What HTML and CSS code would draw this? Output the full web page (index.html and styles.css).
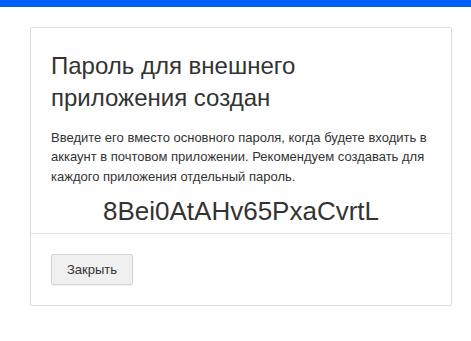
FILE: index.html
```html
<!DOCTYPE html>
<html lang="ru">
<head>
<meta charset="utf-8">
<link rel="stylesheet" href="styles.css">
</head>
<body>
<div class="topbar"></div>
<div class="card">
  <div class="card-body">
    <h1 class="title">Пароль для внешнего приложения создан</h1>
    <p class="text">Введите его вместо основного пароля, когда будете входить в аккаунт в почтовом приложении. Рекомендуем создавать для каждого приложения отдельный пароль.</p>
    <div class="password">8Bei0AtAHv65PxaCvrtL</div>
  </div>
  <div class="card-footer">
    <button class="btn">Закрыть</button>
  </div>
</div>
</body>
</html>
```
FILE: styles.css
```css
html, body {
  margin: 0;
  padding: 0;
  background: #fff;
  font-family: "Liberation Sans", Arial, sans-serif;
  color: #333;
}
.topbar {
  height: 7px;
  background: #005ff9;
}
.card {
  margin: 20px 0 0 30px;
  width: 420px;
  border: 1px solid #ddd;
  box-shadow: 0 1px 2px rgba(0,0,0,0.06);
  border-radius: 2px;
}
.card-body {
  padding: 22px 20px 7px 20px;
}
.title {
  margin: 0;
  font-size: 24px;
  font-weight: normal;
  line-height: 32.4px;
  max-width: 300px;
}
.text {
  margin: 13px 0 0 0;
  font-size: 13px;
  line-height: 19.5px;
}
.password {
  margin-top: 10px;
  text-align: center;
  font-size: 26px;
  line-height: 30px;
}
.card-footer {
  border-top: 1px solid #e5e5e5;
  padding: 20px;
}
.btn {
  display: block;
  width: 82px;
  height: 31px;
  background: #f0f0f0;
  border: 1px solid #d5d5d5;
  border-radius: 2px;
  box-shadow: 0 1px 1px rgba(0,0,0,0.06);
  font-family: "Liberation Sans", Arial, sans-serif;
  font-size: 13px;
  color: #333;
  padding: 0;
}
```
